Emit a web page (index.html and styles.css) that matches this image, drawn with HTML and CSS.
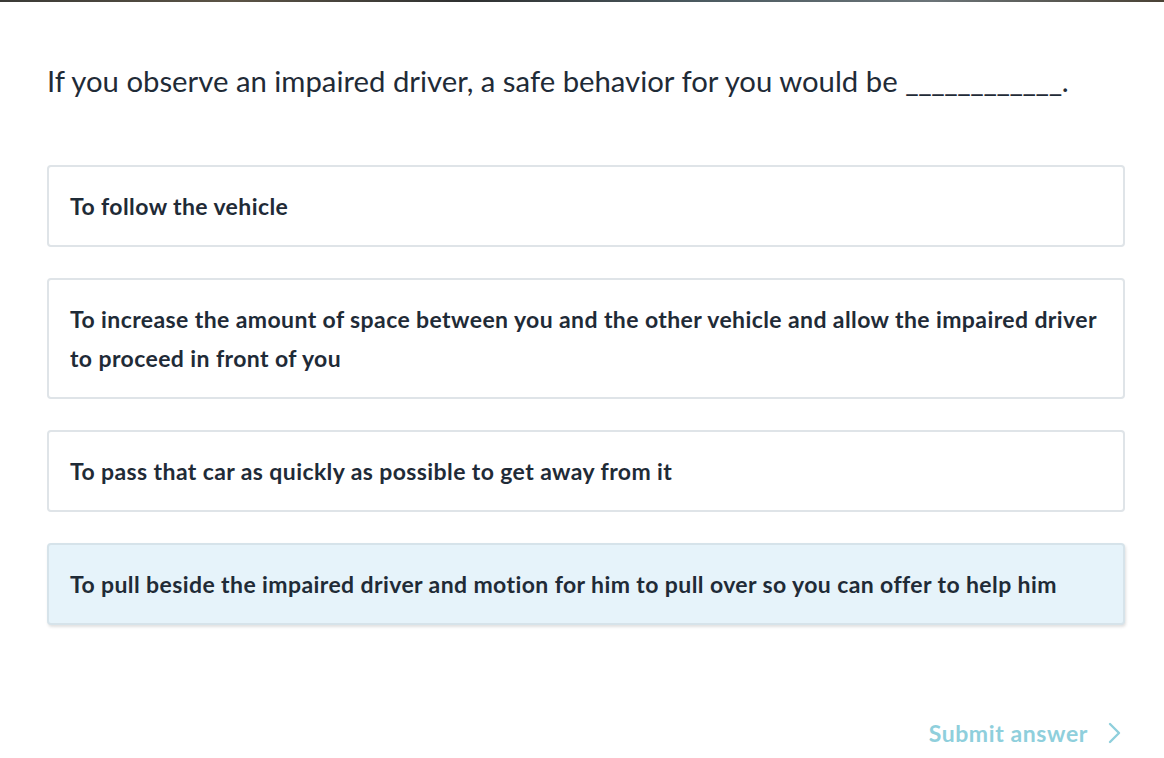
FILE: index.html
```html
<!DOCTYPE html>
<html>
<head>
<meta charset="utf-8">
<link rel="stylesheet" href="styles.css">
</head>
<body>
<div class="topstrip"></div>
<main class="quiz">
  <h1 class="question">If you observe an impaired driver, a safe behavior for you would be <span class="blank">____________</span>.</h1>
  <div class="options">
    <div class="option">To follow the vehicle</div>
    <div class="option">To increase the amount of space between you and the other vehicle and allow the impaired driver to proceed in front of you</div>
    <div class="option">To pass that car as quickly as possible to get away from it</div>
    <div class="option selected">To pull beside the impaired driver and motion for him to pull over so you can offer to help him</div>
  </div>
  <div class="actions">
    <button class="submit">Submit answer
      <svg class="chev" width="15" height="22" viewBox="0 0 15 22"><path d="M3 2 L12 11 L3 20" fill="none" stroke="currentColor" stroke-width="2.4" stroke-linecap="round" stroke-linejoin="round"/></svg>
    </button>
  </div>
</main>
</body>
</html>
```
FILE: styles.css
```css
html, body {
  margin: 0;
  padding: 0;
  background: #ffffff;
}
body {
  font-family: "Lato", "Noto Sans", sans-serif;
  color: #1f2b37;
  width: 1164px;
  height: 758px;
  overflow: hidden;
}
.topstrip {
  height: 2px;
  background: linear-gradient(90deg, #3a3a36 0%, #5c5446 20%, #2e3030 40%, #4b5a60 60%, #6b7478 80%, #4a4235 100%);
}
.quiz {
  padding: 0 39px 0 47px;
}
.question {
  margin: 59px 0 0 0;
  font-size: 29.3px;
  line-height: 40px;
  font-weight: 400;
  letter-spacing: 0;
}
.blank {
  letter-spacing: -0.4px;
}
.options {
  margin-top: 64px;
  display: flex;
  flex-direction: column;
  gap: 31px;
}
.option {
  border: 2px solid #dfe4e8;
  border-radius: 4px;
  padding: 19.5px 21px;
  font-size: 23px;
  line-height: 39px;
  font-weight: 700;
  letter-spacing: 0.4px;
}
.option.selected {
  background: #e6f3fa;
  border-color: #d6e3ea;
  box-shadow: 1px 2px 3px rgba(0, 0, 0, 0.12);
}
.actions {
  display: flex;
  justify-content: flex-end;
  margin-top: 94px;
}
.submit {
  border: 0;
  background: none;
  padding: 0;
  display: flex;
  align-items: center;
  gap: 19px;
  font-family: inherit;
  font-size: 23px;
  font-weight: 700;
  letter-spacing: 0.6px;
  color: #8fcfdc;
  margin-right: 3px;
}
.chev {
  display: block;
}
```
